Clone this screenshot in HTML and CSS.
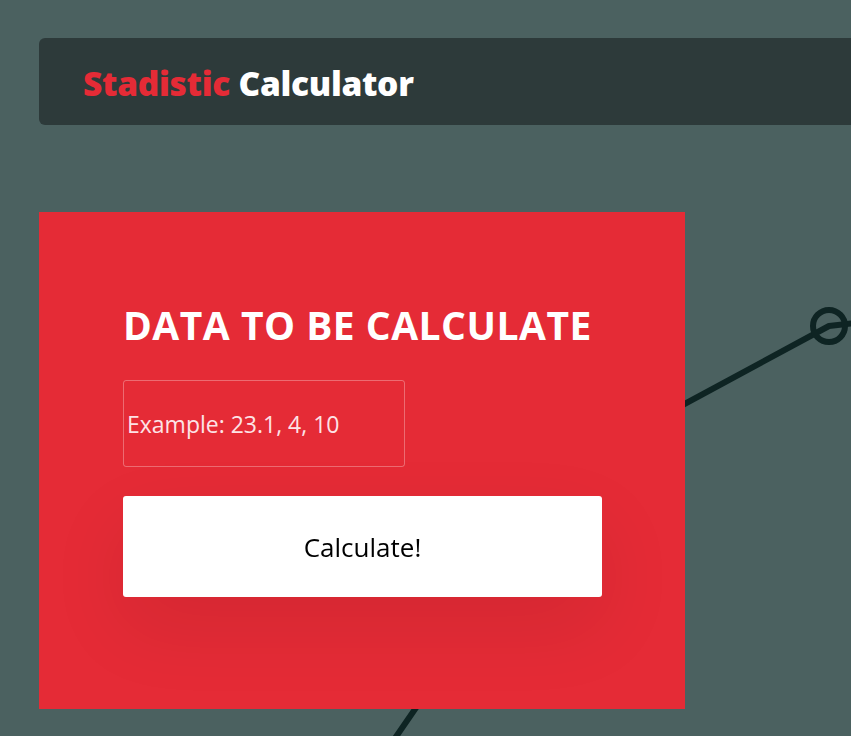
FILE: index.html
```html
<!DOCTYPE html>
<html lang="en">
<head>
<meta charset="utf-8">
<title>Stadistic Calculator</title>
<link rel="stylesheet" href="styles.css">
</head>
<body>
<svg class="chart" width="851" height="736" viewBox="0 0 851 736" aria-hidden="true">
  <polyline points="380,760 590,455 829,326 900,318" fill="none" stroke="#0e2423" stroke-width="6" stroke-linejoin="round"/>
  <circle cx="829" cy="326" r="16" fill="none" stroke="#0e2423" stroke-width="6"/>
</svg>
<div class="page">
  <header class="topbar">
    <h1 class="brand"><span class="brand-accent">Stadistic</span> Calculator</h1>
  </header>
  <main class="card">
    <h2 class="card-title">DATA TO BE CALCULATE</h2>
    <input class="data-input" type="text" placeholder="Example: 23.1, 4, 10" autofocus>
    <button class="calc-btn" type="button">Calculate!</button>
  </main>
</div>
</body>
</html>
```

FILE: styles.css
```css
html, body {
  margin: 0;
  padding: 0;
  overflow: hidden;
}
body {
  background: #4b6160;
  font-family: "Open Sans", "Noto Sans", "DejaVu Sans", sans-serif;
  width: 851px;
  height: 736px;
  position: relative;
}
.chart {
  position: absolute;
  left: 0;
  top: 0;
  z-index: 0;
}
.page {
  position: relative;
  z-index: 1;
  display: flex;
  flex-direction: column;
  align-items: flex-start;
  padding: 38px 0 0 39px;
}
.topbar {
  box-sizing: border-box;
  width: 840px;
  height: 87px;
  background: #2d3a3a;
  border-radius: 6px;
  display: flex;
  align-items: center;
  padding: 5px 0 0 44px;
}
.brand {
  margin: 0;
  font-size: 33.5px;
  font-weight: 800;
  color: #ffffff;
  line-height: 1;
  letter-spacing: -0.3px;
}
.brand-accent {
  color: #e52b36;
}
.card {
  box-sizing: border-box;
  margin-top: 87px;
  width: 646px;
  height: 497px;
  background: #e52b36;
  padding: 90px 84px 0 84px;
  display: flex;
  flex-direction: column;
  align-items: flex-start;
}
.card-title {
  margin: 0;
  color: #ffffff;
  font-size: 39px;
  font-weight: 700;
  line-height: 46px;
  letter-spacing: 0.5px;
  white-space: nowrap;
}
.data-input {
  box-sizing: border-box;
  margin-top: 32px;
  width: 282px;
  height: 87px;
  background: transparent;
  border: 1px solid rgba(255, 255, 255, 0.3);
  border-radius: 3px;
  padding: 0 3px;
  font-family: inherit;
  font-size: 23px;
  color: #ffffff;
  caret-color: #ffffff;
  outline: none;
}
.data-input::placeholder {
  color: #fde3e6;
  opacity: 1;
}
.calc-btn {
  margin-top: 29px;
  width: 479px;
  height: 101px;
  background: #ffffff;
  border: none;
  border-radius: 3px;
  font-family: inherit;
  font-size: 26px;
  color: #000000;
  box-shadow: 0 30px 80px rgba(0, 0, 0, 0.08);
  cursor: pointer;
}
```
